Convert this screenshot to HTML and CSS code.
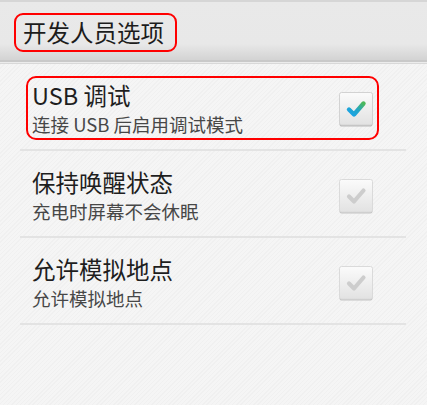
FILE: index.html
```html
<!DOCTYPE html>
<html lang="zh-CN">
<head>
<meta charset="utf-8">
<link rel="stylesheet" href="styles.css">
</head>
<body>
<header class="header">
  <span class="header-title">开发人员选项</span>
</header>
<main class="list">
  <div class="row">
    <div class="item marked">
      <div class="texts">
        <div class="title">USB 调试</div>
        <div class="summary">连接 USB 后启用调试模式</div>
      </div>
      <svg class="check" width="34" height="36" viewBox="0 0 34 36">
        <defs>
          <linearGradient id="bx" x1="0" y1="0" x2="0" y2="1">
            <stop offset="0" stop-color="#fbfbfb"/>
            <stop offset="1" stop-color="#e2e2e2"/>
          </linearGradient>
          <linearGradient id="ck" x1="0" y1="1" x2="1" y2="0">
            <stop offset="0" stop-color="#1aa3e8"/>
            <stop offset="0.5" stop-color="#22a6c8"/>
            <stop offset="1" stop-color="#4cb85a"/>
          </linearGradient>
        </defs>
        <rect x="0.5" y="1.5" width="33" height="33" rx="2" fill="#b9b9b9"/>
        <rect x="0.5" y="0.5" width="33" height="32.5" rx="2" fill="url(#bx)" stroke="#d2d2d2"/>
        <path d="M10 17.5 L15 22.5 L24.5 11.5" fill="none" stroke="url(#ck)" stroke-width="4.4" stroke-linecap="round" stroke-linejoin="round"/>
      </svg>
    </div>
  </div>
  <div class="row">
    <div class="item">
      <div class="texts">
        <div class="title">保持唤醒状态</div>
        <div class="summary">充电时屏幕不会休眠</div>
      </div>
      <svg class="check" width="34" height="36" viewBox="0 0 34 36">
        <rect x="0.5" y="1.5" width="33" height="33" rx="2" fill="#c4c4c4"/>
        <rect x="0.5" y="0.5" width="33" height="32.5" rx="2" fill="url(#bx)" stroke="#dadada"/>
        <path d="M10 17.5 L15 22.5 L24.5 11.5" fill="none" stroke="#cdcdcd" stroke-width="4.2" stroke-linecap="round" stroke-linejoin="round"/>
      </svg>
    </div>
  </div>
  <div class="row">
    <div class="item">
      <div class="texts">
        <div class="title">允许模拟地点</div>
        <div class="summary">允许模拟地点</div>
      </div>
      <svg class="check" width="34" height="36" viewBox="0 0 34 36">
        <rect x="0.5" y="1.5" width="33" height="33" rx="2" fill="#c4c4c4"/>
        <rect x="0.5" y="0.5" width="33" height="32.5" rx="2" fill="url(#bx)" stroke="#dadada"/>
        <path d="M10 17.5 L15 22.5 L24.5 11.5" fill="none" stroke="#cdcdcd" stroke-width="4.2" stroke-linecap="round" stroke-linejoin="round"/>
      </svg>
    </div>
  </div>
</main>
</body>
</html>
```
FILE: styles.css
```css
html, body {
  margin: 0;
  padding: 0;
}
body {
  width: 427px;
  height: 405px;
  overflow: hidden;
  font-family: "Noto Sans CJK SC", "Noto Sans", sans-serif;
  background-color: #f5f5f5;
  background-image: repeating-linear-gradient(135deg, rgba(0,0,0,0.018) 0 1px, rgba(255,255,255,0) 1px 3px);
}
.header {
  height: 62px;
  box-sizing: border-box;
  border-top: 2px solid #d6d6d6;
  border-bottom: 2px solid #c9c9c9;
  background: linear-gradient(#e9e9e9 0, #e8e8e8 72%, #d3d3d3 100%);
  padding: 11px 0 0 14px;
  box-shadow: 0 1px 0 #ececec, 0 2px 0 #d8d8d8;
}
.header-title {
  display: inline-block;
  border: 2px solid #f00;
  border-radius: 9px;
  padding: 0 11px 0 7px;
  height: 35px;
  line-height: 34px;
  font-size: 23.5px;
  color: #1c1c1c;
}
.list {
  padding: 2px 21px 0 20px;
}
.row {
  height: 87px;
  border-bottom: 2px solid #e3e3e3;
  box-sizing: border-box;
  padding: 12px 27px 0 6px;
}
.item {
  display: flex;
  align-items: center;
  justify-content: space-between;
  height: 64px;
  box-sizing: border-box;
  border: 2px solid transparent;
  border-radius: 10px;
  padding: 0 4px 0 4px;
}
.item.marked {
  border-color: #f00;
}
.texts {
  display: flex;
  flex-direction: column;
}
.title {
  font-size: 23.5px;
  line-height: 32px;
  color: #1e1e1e;
}
.summary {
  font-size: 18.5px;
  line-height: 26px;
  color: #474747;
}
.check {
  display: block;
  margin-top: 4px;
}
```
